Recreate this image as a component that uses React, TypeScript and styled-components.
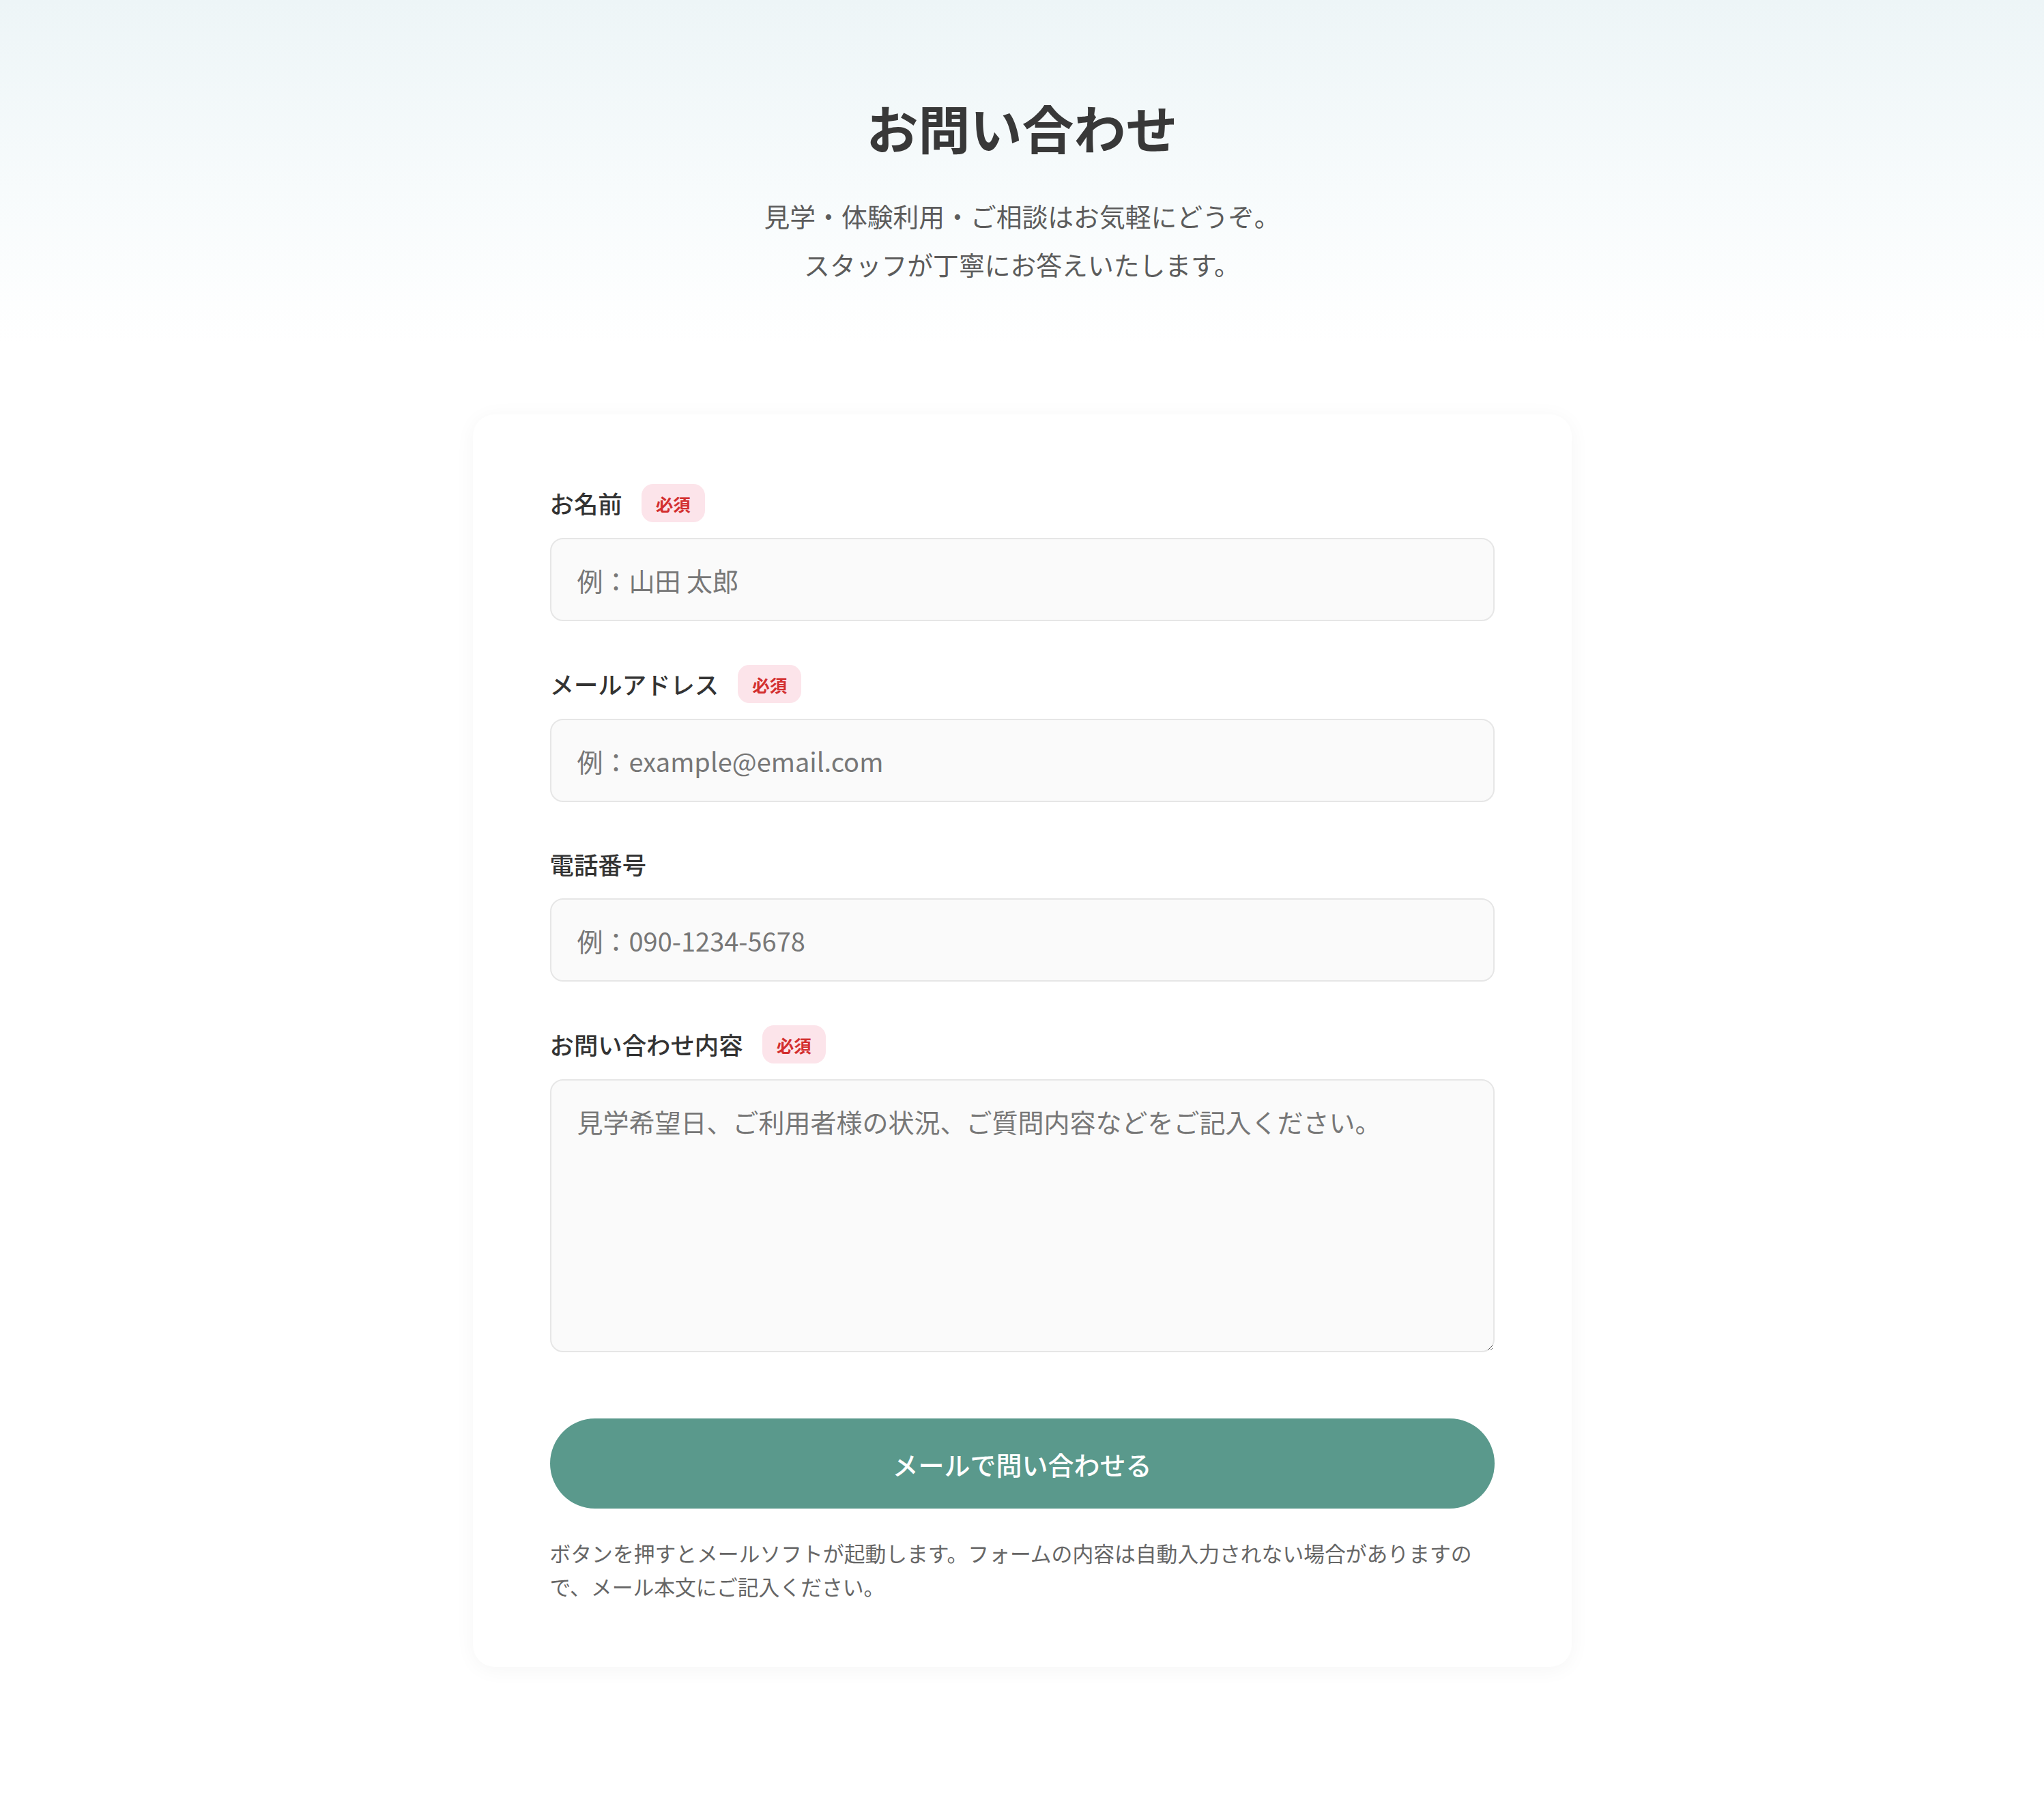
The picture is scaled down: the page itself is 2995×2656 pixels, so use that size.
import React from "react";
import styled, { createGlobalStyle } from "styled-components";

const GlobalStyle = createGlobalStyle`
  html, body {
    margin: 0;
    padding: 0;
    background: #ffffff;
  }
  body {
    font-family: "Noto Sans CJK JP", "Noto Sans", sans-serif;
    color: #333333;
  }
  * {
    box-sizing: border-box;
  }
`;

const Page = styled.main`
  width: 100%;
  min-height: 2656px;
  background: #ffffff;
`;

const Hero = styled.header`
  padding: 136px 0 80px;
  text-align: center;
  background: linear-gradient(180deg, #edf5f7 0%, #f7fbfc 55%, #ffffff 100%);
`;

const Title = styled.h1`
  margin: 0 0 44px;
  font-size: 76px;
  line-height: 100px;
  font-weight: 700;
  color: #383838;
  letter-spacing: 0;
`;

const Lead = styled.p`
  margin: 0;
  font-size: 37.8px;
  line-height: 71px;
  color: #5c5c5c;
`;

const Section = styled.section`
  display: flex;
  justify-content: center;
  padding: 105px 0 200px;
`;

const Card = styled.form`
  width: 1610px;
  padding: 102px 113px 94px;
  background: #ffffff;
  border-radius: 32px;
  box-shadow: 0 4px 30px rgba(0, 0, 0, 0.045);
`;

const Field = styled.div`
  margin-bottom: 64px;
`;

const LabelRow = styled.div`
  display: flex;
  align-items: center;
  gap: 28px;
  min-height: 54px;
  margin-bottom: 23px;
`;

const Label = styled.label`
  font-size: 35.4px;
  line-height: 54px;
  font-weight: 500;
  color: #333333;
`;

const Required = styled.span`
  display: inline-flex;
  align-items: center;
  justify-content: center;
  height: 56px;
  padding: 0 21px;
  border-radius: 17px;
  background: #fce4ea;
  color: #d32f2f;
  font-size: 25.5px;
  font-weight: 700;
`;

const inputBase = `
  display: block;
  width: 100%;
  border: 2px solid #e6e6e6;
  border-radius: 19px;
  background: #fafafa;
  font-family: "Noto Sans CJK JP", "Noto Sans", sans-serif;
  font-size: 38px;
  color: #333333;
  outline: none;
  &::placeholder {
    color: #777777;
    opacity: 1;
  }
`;

const TextInput = styled.input`
  ${inputBase}
  height: 122px;
  padding: 0 38px;
`;

const TextArea = styled.textarea`
  ${inputBase}
  height: 400px;
  padding: 30px 38px 20px;
  line-height: 1.6;
  resize: vertical;
`;

const SubmitButton = styled.button`
  display: flex;
  align-items: center;
  justify-content: center;
  width: 100%;
  height: 132px;
  margin-top: 97px;
  border: none;
  border-radius: 66px;
  background: #5a998c;
  color: #ffffff;
  font-family: "Noto Sans CJK JP", "Noto Sans", sans-serif;
  font-size: 38px;
  font-weight: 500;
  cursor: pointer;
`;

const Note = styled.p`
  margin: 40px 0 0;
  font-size: 30.8px;
  line-height: 49px;
  color: #666666;
`;

interface FieldProps {
  id: string;
  label: string;
  required?: boolean;
  children: React.ReactNode;
}

const FormField: React.FC<FieldProps> = ({ id, label, required, children }) => (
  <Field>
    <LabelRow>
      <Label htmlFor={id}>{label}</Label>
      {required && <Required>必須</Required>}
    </LabelRow>
    {children}
  </Field>
);

export default function App() {
  return (
    <Page>
      <GlobalStyle />
      <Hero>
        <Title>お問い合わせ</Title>
        <Lead>
          見学・体験利用・ご相談はお気軽にどうぞ。
          <br />
          スタッフが丁寧にお答えいたします。
        </Lead>
      </Hero>
      <Section>
        <Card onSubmit={(e) => e.preventDefault()}>
          <FormField id="name" label="お名前" required>
            <TextInput id="name" type="text" placeholder="例：山田 太郎" />
          </FormField>
          <FormField id="email" label="メールアドレス" required>
            <TextInput id="email" type="email" placeholder="例：example@email.com" />
          </FormField>
          <FormField id="tel" label="電話番号">
            <TextInput id="tel" type="tel" placeholder="例：090-1234-5678" />
          </FormField>
          <FormField id="message" label="お問い合わせ内容" required>
            <TextArea
              id="message"
              placeholder="見学希望日、ご利用者様の状況、ご質問内容などをご記入ください。"
            />
          </FormField>
          <SubmitButton type="submit">メールで問い合わせる</SubmitButton>
          <Note>
            ボタンを押すとメールソフトが起動します。フォームの内容は自動入力されない場合がありますので、メール本文にご記入ください。
          </Note>
        </Card>
      </Section>
    </Page>
  );
}
